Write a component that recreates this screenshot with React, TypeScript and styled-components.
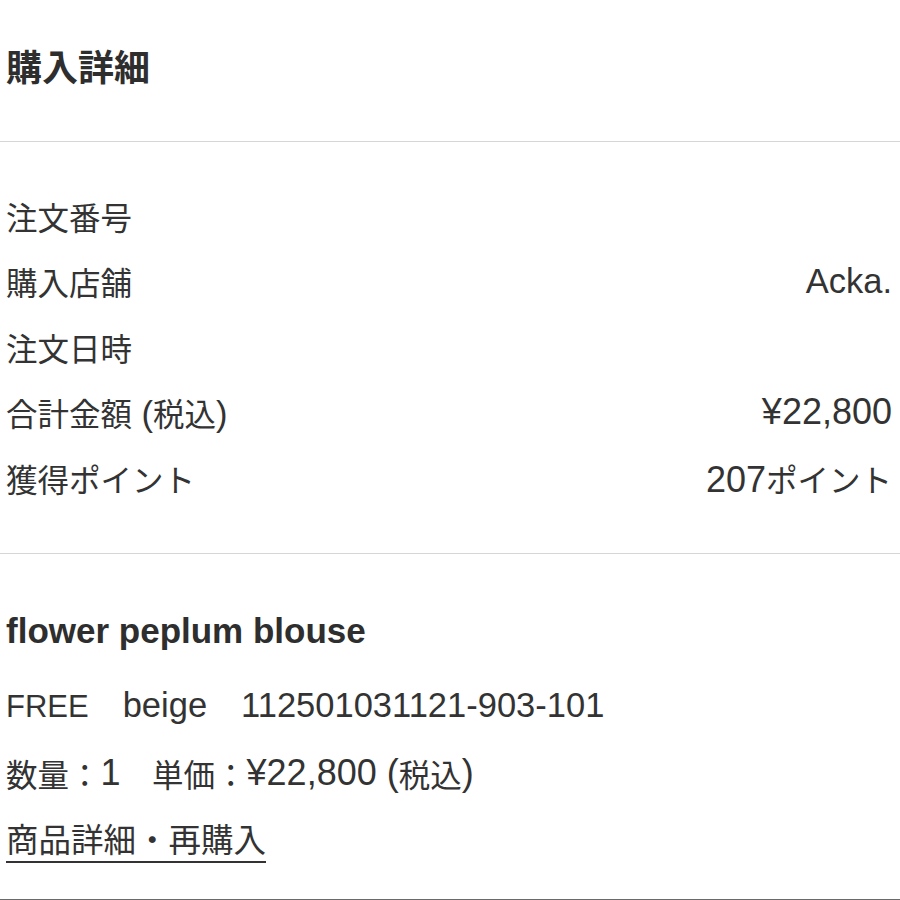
import React from "react";
import styled, { createGlobalStyle } from "styled-components";

const Global = createGlobalStyle`
  html, body { margin: 0; padding: 0; background: #fff; }
  body {
    font-family: "Liberation Sans", "Noto Sans CJK JP", sans-serif;
    color: #333;
  }
`;

const Page = styled.div`
  width: 900px;
  height: 900px;
  box-sizing: border-box;
  border-bottom: 1px solid #6a6a6a;
  display: flex;
  flex-direction: column;
  overflow: hidden;
`;

const Header = styled.header`
  height: 142px;
  box-sizing: border-box;
  padding: 46px 8px 0 6px;
  border-bottom: 1px solid #d6d6d6;
`;

const Title = styled.h1`
  margin: 0;
  font-family: "Noto Sans CJK JP", sans-serif;
  font-size: 36px;
  line-height: 38px;
  font-weight: 700;
  color: #2e2e2e;
`;

const Summary = styled.section`
  padding: 41px 8px 42px 6px;
  border-bottom: 1px solid #d6d6d6;
  display: flex;
  flex-direction: column;
`;

const Row = styled.div`
  height: 65.5px;
  display: flex;
  align-items: center;
  justify-content: space-between;
`;

const Label = styled.span`
  font-family: "Noto Sans CJK JP", sans-serif;
  font-size: 31.5px;
  color: #333;
  display: flex;
  align-items: baseline;
`;

const Value = styled.span`
  color: #333;
  display: flex;
  align-items: baseline;
`;

const Latin = styled.span<{ $size?: number }>`
  font-family: "Liberation Sans", sans-serif;
  font-size: ${(p) => p.$size ?? 34.5}px;
  white-space: pre;
`;

const Cjk = styled.span`
  font-family: "Noto Sans CJK JP", sans-serif;
  font-size: 31.5px;
  white-space: pre;
`;

const Product = styled.section`
  padding: 44px 8px 0 6px;
  display: flex;
  flex-direction: column;
`;

const ProductName = styled.h2`
  margin: 0;
  height: 66px;
  line-height: 66px;
  font-family: "Liberation Sans", sans-serif;
  font-size: 35px;
  font-weight: 700;
  color: #2e2e2e;
`;

const Spec = styled.div<{ $mt: number }>`
  margin-top: ${(p) => p.$mt}px;
  height: 66px;
  display: flex;
  align-items: baseline;
  padding-top: 14px;
  box-sizing: border-box;
  gap: 34px;
  color: #333;
`;

const QtyLine = styled.div<{ $mt: number }>`
  margin-top: ${(p) => p.$mt}px;
  height: 66px;
  display: flex;
  align-items: center;
  color: #333;
`;

const LinkLine = styled.div`
  margin-top: 9px;
  display: flex;
`;

const DetailLink = styled.a`
  display: inline-flex;
  align-items: center;
  height: 46px;
  font-family: "Noto Sans CJK JP", sans-serif;
  font-size: 32.5px;
  color: #333;
  text-decoration: none;
  border-bottom: 2.5px solid #333;
`;

const rows: { label: React.ReactNode; value?: React.ReactNode }[] = [
  { label: "注文番号" },
  { label: "購入店舗", value: <Latin>Acka.</Latin> },
  { label: "注文日時" },
  {
    label: (
      <>
        <Cjk>合計金額</Cjk>
        <Latin> (</Latin>
        <Cjk>税込</Cjk>
        <Latin>)</Latin>
      </>
    ),
    value: <Latin $size={36}>¥22,800</Latin>,
  },
  {
    label: "獲得ポイント",
    value: (
      <>
        <Latin $size={36}>207</Latin>
        <Cjk>ポイント</Cjk>
      </>
    ),
  },
];

export default function App() {
  return (
    <>
      <Global />
      <Page>
        <Header>
          <Title>購入詳細</Title>
        </Header>
        <Summary>
          {rows.map((r, i) => (
            <Row key={i}>
              <Label>{r.label}</Label>
              <Value>{r.value}</Value>
            </Row>
          ))}
        </Summary>
        <Product>
          <ProductName>flower peplum blouse</ProductName>
          <Spec $mt={8}>
            <Latin $size={31}>FREE</Latin>
            <Latin>beige</Latin>
            <Latin>112501031121-903-101</Latin>
          </Spec>
          <QtyLine $mt={2}>
            <Cjk>数量：</Cjk>
            <Latin $size={36}>1</Latin>
            <Cjk>　単価：</Cjk>
            <Latin $size={36}>¥22,800 (</Latin>
            <Cjk>税込</Cjk>
            <Latin $size={36}>)</Latin>
          </QtyLine>
          <LinkLine>
            <DetailLink href="#">商品詳細・再購入</DetailLink>
          </LinkLine>
        </Product>
      </Page>
    </>
  );
}
